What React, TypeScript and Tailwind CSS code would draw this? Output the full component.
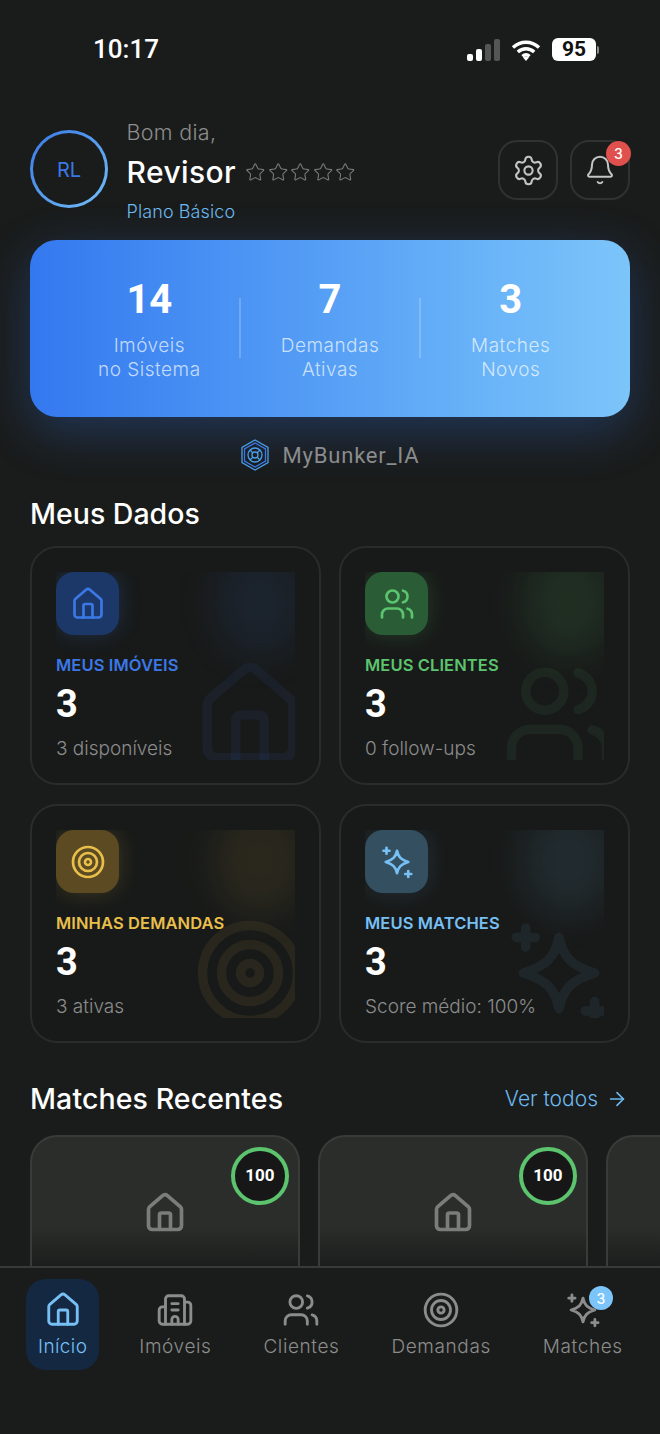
import { ArrowRight, Bell, Building2, House, Settings, Star, Target, Users } from "lucide-react";

const sans = "font-['Inter','Noto_Sans',sans-serif]";
const digits = "font-['Roboto',sans-serif]";

function Stars4({ size, strokeWidth = 2, className }: { size: number; strokeWidth?: number; className?: string }) {
  return (
    <svg width={size} height={size} viewBox="0 0 24 24" fill="none" stroke="currentColor" strokeWidth={strokeWidth} strokeLinecap="round" strokeLinejoin="round" className={className}>
      <path d="M12 4.500c.9 4.200 2.600 6 7.500 7.500-4.900 1.500-6.600 3.300-7.500 7.500-.9-4.200-2.600-6-7.500-7.500 4.900-1.500 6.600-3.300 7.500-7.500z" />
      <path d="M5 2.500v4M3 4.500h4" />
      <path d="M19.500 18v4M17.500 20h4" />
    </svg>
  );
}

const stats = [
  { value: "14", lines: ["Imóveis", "no Sistema"] },
  { value: "7", lines: ["Demandas", "Ativas"] },
  { value: "3", lines: ["Matches", "Novos"] },
];

const cards = [
  { title: "MEUS IMÓVEIS", sub: "3 disponíveis", Icon: House, text: "text-[#3b78e6]", tile: "bg-[#1b3868] shadow-[0_0_22px_rgba(59,120,230,0.22)]", glow: "bg-[#3b78e6]/10", ghost: "text-[#3b78e6]/8" },
  { title: "MEUS CLIENTES", sub: "0 follow-ups", Icon: Users, text: "text-[#5cc46e]", tile: "bg-[#2a5c36] shadow-[0_0_22px_rgba(92,196,110,0.2)]", glow: "bg-[#5cc46e]/12", ghost: "text-[#5cc46e]/8" },
  { title: "MINHAS DEMANDAS", sub: "3 ativas", Icon: Target, text: "text-[#e9bf4c]", tile: "bg-[#5c4b22] shadow-[0_0_22px_rgba(233,191,76,0.18)]", glow: "bg-[#e9bf4c]/9", ghost: "text-[#e9bf4c]/8" },
  { title: "MEUS MATCHES", sub: "Score médio: 100%", Icon: Stars4, text: "text-[#76c0f5]", tile: "bg-[#344f5f] shadow-[0_0_22px_rgba(118,192,245,0.14)]", glow: "bg-[#76c0f5]/10", ghost: "text-[#76c0f5]/8" },
];

const nav = [
  { label: "Imóveis", Icon: Building2 },
  { label: "Clientes", Icon: Users },
  { label: "Demandas", Icon: Target },
  { label: "Matches", Icon: Stars4, badge: "3" },
];

function MatchCard({ filled = true }: { filled?: boolean }) {
  return (
    <div className="relative h-[240px] w-[270px] shrink-0 rounded-t-[27px] border-2 border-b-0 border-[#393b39] bg-gradient-to-b from-[#2b2d2b] from-[38%] to-[#1b1d1c] to-[55%]">
      {filled && (
        <>
          <div className="absolute right-[9px] top-[10px] flex h-[58px] w-[58px] items-center justify-center rounded-full border-4 border-[#5cc46e] bg-[#161716]">
            <span className={`${digits} text-[17px] font-bold text-white`}>100</span>
          </div>
          <div className="flex justify-center pt-[54px]">
            <House size={44} strokeWidth={2} className="text-[#7b7c7b]" />
          </div>
        </>
      )}
    </div>
  );
}

export default function App() {
  return (
    <div className={`${sans} flex h-[1434px] w-[660px] flex-col overflow-hidden bg-[#1a1c1b] text-white`}>
      <main className="h-[1266px] shrink-0 overflow-hidden">
        {/* status bar */}
        <div className="flex h-[118px] items-start justify-between pl-[93px] pr-[61px] pt-[33px]">
          <span className="font-['Roboto',sans-serif] text-[26px] font-medium leading-[32px]">10:17</span>
          <div className="mt-[5px] flex items-center gap-[11px]">
            <svg width="34" height="22" viewBox="0 0 34 22">
              <rect x="1" y="15" width="6" height="7" rx="2" fill="#fff" />
              <rect x="10" y="10" width="6" height="12" rx="2" fill="#fff" />
              <rect x="19" y="5" width="6" height="17" rx="2" fill="#555" />
              <rect x="28" y="0" width="6" height="22" rx="2" fill="#555" />
            </svg>
            <svg width="30" height="22" viewBox="0 0 30 22" fill="none" stroke="#fff" strokeWidth="3.400">
              <path d="M2 8.500c7.500-7 18.500-7 26 0" />
              <path d="M6.800 13c4.800-4.300 11.600-4.300 16.400 0" />
              <path d="M11.400 17.300c2.200-1.800 5-1.800 7.200 0" />
              <path d="M15 22l-3-3.500c1.800-1.300 4.200-1.300 6 0z" fill="#fff" stroke="none" />
            </svg>
            <div className="flex items-center gap-[1px]">
              <div className="flex h-[23px] w-[44px] items-center justify-center rounded-[6px] bg-white">
                <span className="font-['Roboto',sans-serif] text-[21px] font-bold leading-none text-[#111]">95</span>
              </div>
              <div className="h-[8px] w-[2px] rounded-r-full bg-white/50" />
            </div>
          </div>
        </div>

        {/* header */}
        <div className="flex items-start px-[30px]">
          <div className="mt-[12px] h-[78px] w-[78px] shrink-0 rounded-full bg-gradient-to-br from-[#3a78e6] to-[#74bff6] p-[3px]">
            <div className="flex h-full w-full items-center justify-center rounded-full bg-[#1a1c1b]">
              <span className="pt-[2px] text-[20px] font-normal text-[#3b78e6]">RL</span>
            </div>
          </div>
          <div className="ml-[18.500px] flex-1">
            <p className="text-[21.500px] font-light leading-[28px] tracking-[0.3px] text-[#8c8c8c]">Bom dia,</p>
            <div className="mt-[6px] flex h-[40px] items-center">
              <span className="text-[30px] font-medium leading-[40px] tracking-[0.4px]">Revisor</span>
              <div className="ml-[9px] flex gap-[2px] text-[#777]">
                <Star size={20.500} strokeWidth={1.300} />
                <Star size={20.500} strokeWidth={1.300} />
                <Star size={20.500} strokeWidth={1.300} />
                <Star size={20.500} strokeWidth={1.300} />
                <Star size={20.500} strokeWidth={1.300} />
              </div>
            </div>
            <p className="mt-[8px] text-[18px] font-light leading-[24px] tracking-[0.1px] text-[#6db9f0]">Plano Básico</p>
          </div>
          <div className="mt-[22px] flex gap-[12px]">
            <button className="flex h-[60px] w-[60px] items-center justify-center rounded-[19px] border-2 border-[#303230] text-[#c4c4c4]">
              <Settings size={33} strokeWidth={1.500} />
            </button>
            <button className="relative flex h-[60px] w-[60px] items-center justify-center rounded-[19px] border-2 border-[#303230] text-[#c4c4c4]">
              <Bell size={32} strokeWidth={1.500} />
              <span className="absolute right-[-3px] top-[-1px] flex h-[25px] w-[25px] items-center justify-center rounded-full bg-[#e0504c] text-[14px] font-medium text-white">3</span>
            </button>
          </div>
        </div>

        {/* hero */}
        <div className="mx-[30px] mt-[16px] flex h-[177px] items-start rounded-[27px] bg-gradient-to-r from-[#3478ef] to-[#7cc5fa] px-[30px] pt-[38px] shadow-[0_14px_50px_rgba(52,120,239,0.3)]">
          {stats.map((s, i) => (
            <div key={s.value} className="contents">
              {i > 0 && <div className="mt-[20px] h-[60px] w-[2px] shrink-0 bg-white/20" />}
              <div className="flex flex-1 flex-col items-center">
                <span className={`${digits} text-[40px] font-bold leading-[44px]`}>{s.value}</span>
                <span className="mt-[12px] text-[19px] font-light leading-[24px] tracking-[0.5px] text-white/70">{s.lines[0]}</span>
                <span className="text-[19px] font-light leading-[24px] tracking-[0.5px] text-white/70">{s.lines[1]}</span>
              </div>
            </div>
          ))}
        </div>

        {/* brand */}
        <div className="mt-[23px] flex h-[30px] items-center justify-center gap-[14px]">
          <svg width="28" height="32" viewBox="0 0 28 32" fill="none" stroke="#4a9de8" strokeWidth="1.300">
            <path d="M14 1l13 7.500v15L14 31 1 23.500v-15z" />
            <path d="M14 4l10.500 6v12L14 28 3.500 22V10z" stroke="#3b78e6" />
            <circle cx="14" cy="16" r="7" />
            <circle cx="14" cy="16" r="3" />
            <path d="M9 11l3 3M19 11l-3 3M9 21l3-3M19 21l-3-3" />
          </svg>
          <span className={`${digits} text-[22px] font-normal tracking-[0.8px] text-[#8a8c8e]`}>MyBunker_IA</span>
        </div>

        {/* meus dados */}
        <h2 className="ml-[30px] mt-[26px] text-[28.500px] font-medium leading-[36px]">Meus Dados</h2>
        <div className="mx-[30px] mt-[14px] grid grid-cols-2 gap-x-[18px] gap-y-[19px]">
          {cards.map(({ title, sub, Icon, text, tile, glow, ghost }) => (
            <div key={title} className="h-[239px] rounded-[27px] border-2 border-[#2a2c2a] bg-[#181a19] px-[24px] pb-[23px] pt-[24px]">
              <div className="relative h-[188px] overflow-hidden">
                <div className={`absolute right-[-10px] top-[-25px] h-[110px] w-[90px] rounded-full blur-[18px] ${glow}`} />
                <div className={`absolute bottom-[-12px] right-[-12px] ${ghost}`}>
                  <Icon size={114} strokeWidth={2} />
                </div>
                <div className={`relative flex h-[63px] w-[63px] items-center justify-center rounded-[18px] ${tile} ${text}`}>
                  <Icon size={36} strokeWidth={1.800} />
                </div>
                <p className={`relative mt-[18px] text-[16.500px] font-semibold leading-[24px] tracking-[0.1px] ${text}`}>{title}</p>
                <p className={`${digits} relative mt-[5px] text-[38px] font-bold leading-[44px]`}>3</p>
                <p className="relative mt-[10px] text-[19px] font-light leading-[26px] text-[#8c8c8c]">{sub}</p>
              </div>
            </div>
          ))}
        </div>

        {/* matches recentes */}
        <div className="mt-[38px] flex h-[36px] items-center justify-between pl-[30px] pr-[32px]">
          <h2 className="text-[28.500px] font-medium leading-[36px] tracking-[0.1px]">Matches Recentes</h2>
          <div className="flex items-center gap-[8px] text-[#6db9f0]">
            <span className="text-[21px] font-light">Ver todos</span>
            <ArrowRight size={22} strokeWidth={1.800} />
          </div>
        </div>
        <div className="mt-[18px] flex gap-[18px] pl-[30px]">
          <MatchCard />
          <MatchCard />
          <MatchCard filled={false} />
        </div>
      </main>

      {/* bottom nav */}
      <nav className="flex flex-1 items-start gap-[28px] border-t-2 border-[#383a38] bg-[#1a1c1b] pl-[26px] pt-[11px]">
        <div className="flex flex-col items-center rounded-[20px] bg-[#142842] px-[12px] pb-[11px] pt-[12px] text-[#76c0f5]">
          <House size={38} strokeWidth={1.800} />
          <span className="mt-[6px] text-[19px] font-light leading-[24px] tracking-[0.4px]">Início</span>
        </div>
        {nav.map(({ label, Icon, badge }) => (
          <div key={label} className="flex flex-col items-center px-[12px] pb-[11px] pt-[12px] text-[#8c8c8c]">
            <div className="relative">
              <Icon size={38} strokeWidth={1.800} />
              {badge && (
                <span className="absolute right-[-11px] top-[-5px] flex h-[24px] w-[24px] items-center justify-center rounded-full bg-[#7cc5fa] text-[14px] font-medium text-white">{badge}</span>
              )}
            </div>
            <span className="mt-[6px] text-[19px] font-light leading-[24px] tracking-[0.6px]">{label}</span>
          </div>
        ))}
      </nav>
    </div>
  );
}
